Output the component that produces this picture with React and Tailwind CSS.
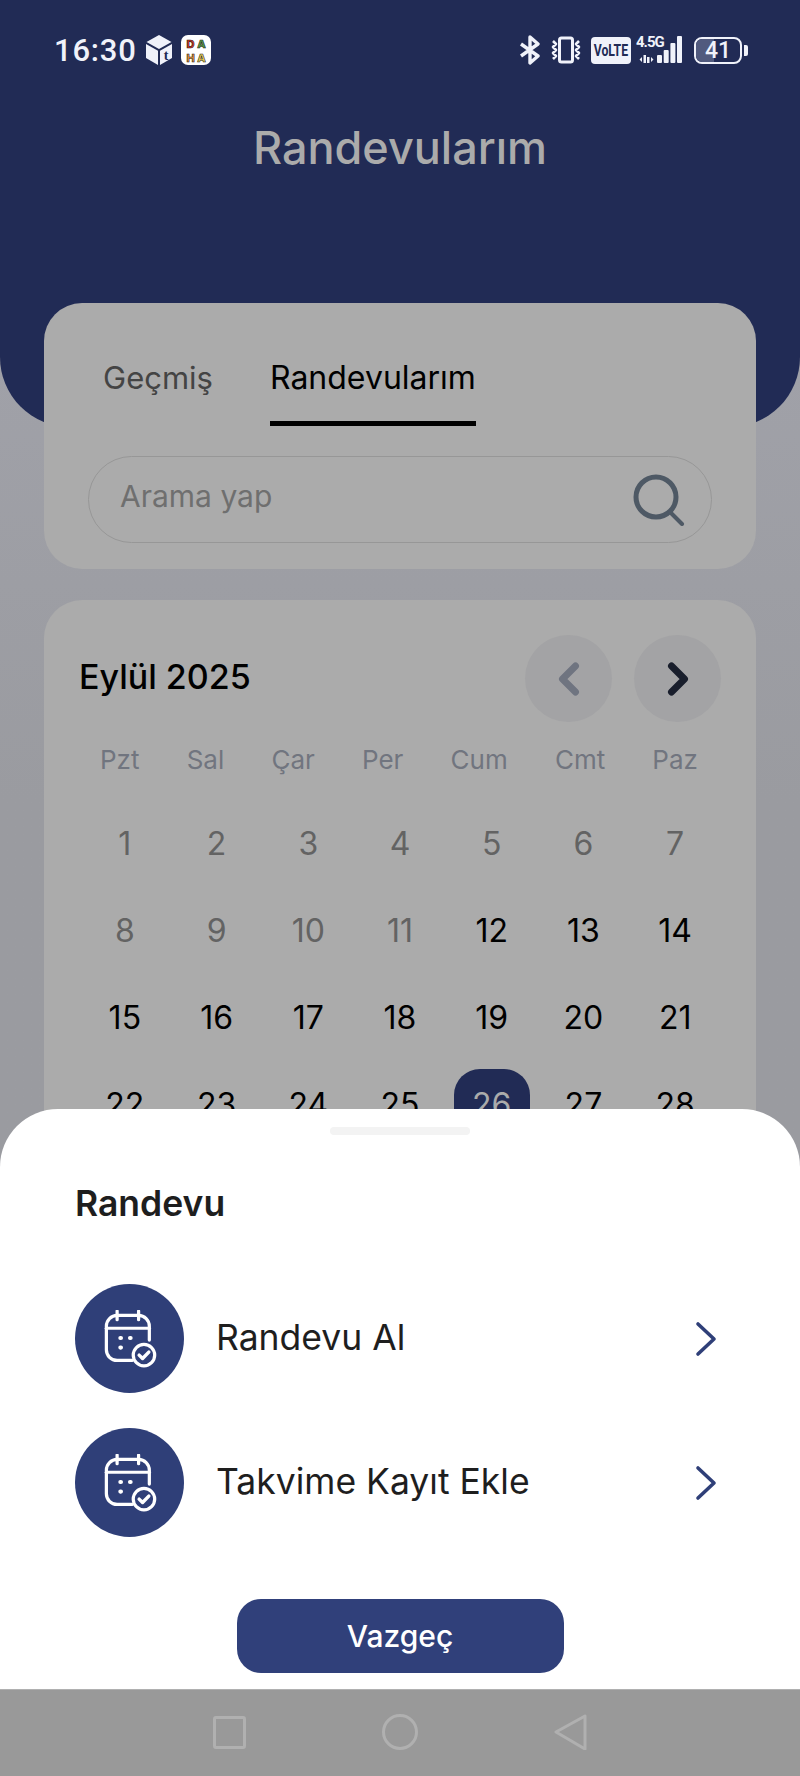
import { ChevronLeft, ChevronRight } from 'lucide-react';

const weekDays = ['Pzt', 'Sal', 'Çar', 'Per', 'Cum', 'Cmt', 'Paz'];
const passedDays = 11;
const days = Array.from({ length: 28 }, (_, i) => i + 1);

function CalendarCheck() {
  return (
    <svg width="54" height="58" viewBox="0 0 50 54" fill="none" stroke="white" strokeWidth="3" strokeLinecap="round" strokeLinejoin="round">
      <path d="M27 47H13a10 10 0 0 1-10-10V15A10 10 0 0 1 13 5h20a10 10 0 0 1 10 10v13" />
      <path d="M3 17h40" />
      <path d="M13 1v8M33 1v8" />
      <circle cx="38" cy="42" r="10" />
      <path d="M33.500 42l3.200 3.200 5.800-6" strokeWidth="3.200" />
      <path d="M16 26h.6M25 26h.6M16 35h.6" strokeWidth="3.800" />
    </svg>
  );
}

function SheetRow({ label }) {
  return (
    <div className="flex items-center">
      <div className="w-[109px] h-[109px] rounded-full bg-[#2f3f78] flex items-center justify-center">
        <CalendarCheck />
      </div>
      <span className="ml-[32px] flex-1 text-[35.5px] font-normal text-[#1e1e1e] -mt-[2px]">{label}</span>
      <svg width="24" height="36" viewBox="0 0 24 36" fill="none" stroke="#2f3f78" strokeWidth="3.600" strokeLinecap="round" strokeLinejoin="round" className="mr-[5px]">
        <path d="M4 3l16 15L4 33" />
      </svg>
    </div>
  );
}

function DahaLogo() {
  return (
    <svg className="ml-[9px]" width="30" height="30" viewBox="0 0 30 30" fontFamily="Inter" fontWeight="800" fontSize="11" stroke="#2a1c14" strokeWidth="0.6" textAnchor="middle">
      <rect width="30" height="30" rx="7" fill="white" stroke="none" />
      <text x="9.500" y="12.500" fill="#d0341f">D</text>
      <text x="20.500" y="12.500" fill="#4f9a48">A</text>
      <text x="9.500" y="26.500" fill="#e8933f">H</text>
      <text x="20.500" y="26.500" fill="#eed35a">A</text>
    </svg>
  );
}

function StatusBar() {
  return (
    <div className="flex items-center justify-between h-[30px] pl-[54px] pr-[52px] text-[#f0f2fa]">
      <div className="flex items-center">
        <span className="text-[31px] font-medium tracking-[0.8px] font-[Roboto] leading-none">16:30</span>
        <svg className="ml-[9px]" width="26" height="30" viewBox="0 0 26 30">
          <path d="M13 0l12.500 7L13 14 .5 7z" fill="#f0f2fa" />
          <path d="M0 9l12 6.800V30L0 23z" fill="#f0f2fa" />
          <path d="M14 15.800L26 9v14l-12 7z" fill="#f0f2fa" />
          <text x="20" y="25" fontSize="14" fontWeight="700" fontFamily="Liberation Serif" fill="#212b55" textAnchor="middle">t</text>
        </svg>
        <DahaLogo />
      </div>
      <div className="flex items-center">
        <svg width="22" height="30" viewBox="0 0 22 30" fill="none" stroke="#f0f2fa" strokeWidth="3.400" strokeLinejoin="round">
          <path d="M2 9l17 12-8 7V2l8 7L2 21" />
        </svg>
        <svg className="ml-[9px]" width="32" height="28" viewBox="0 0 32 28" fill="none" stroke="#f0f2fa" strokeWidth="2.600" strokeLinejoin="round">
          <rect x="9.500" y="2" width="13" height="24" rx="2" strokeWidth="3" />
          <path d="M3 5l3 3-3 3 3 3-3 3 3 3-3 3M29 5l-3 3 3 3-3 3 3 3-3 3 3 3" />
        </svg>
        <div className="ml-[9px] w-[40px] h-[27px] rounded-[4px] bg-[#f0f2fa] text-[#212b55] text-[17px] font-bold font-[Roboto] leading-[27px] text-center">
          <span className="inline-block scale-x-[0.72] origin-center whitespace-nowrap -mx-[4px]">VoLTE</span>
        </div>
        <div className="ml-[5px] relative w-[47px] h-[30px]">
          <span className="absolute left-0 -top-[1px] text-[15px] font-bold font-[Roboto] leading-[16px] tracking-[-1px]">4.5G</span>
          <svg className="absolute left-0 top-0" width="47" height="30" viewBox="0 0 47 30" fill="#f0f2fa">
            <path d="M7.500 20h2.500v8H7.500zM11 22h2.500v6H11zM6 22v5l-2.500-2.500zM15 22v5l2.500-2.500z" />
            <rect x="21" y="20" width="5" height="8" rx="1" />
            <rect x="27.700" y="15" width="5" height="13" rx="1" />
            <rect x="34.400" y="8" width="5" height="20" rx="1" />
            <rect x="41" y="1" width="5" height="27" rx="1" />
          </svg>
        </div>
        <div className="ml-[11px] relative w-[48px] h-[27px] rounded-[8px] border-2 border-[#f0f2fa] overflow-hidden">
          <div className="h-full w-[41%] bg-[#515a7e]"></div>
          <span className="absolute inset-0 text-center text-[23px] font-medium font-[Roboto] leading-[23px]">41</span>
        </div>
        <div className="ml-[2px] w-[4px] h-[11px] rounded-r-[2px] bg-[#f0f2fa]"></div>
      </div>
    </div>
  );
}

export default function App() {
  return (
    <div className="relative h-[1776px] w-[800px] overflow-hidden bg-gradient-to-b from-[#a5a6af] to-[#9a9ba0] to-[45%] font-[Inter]">
      {/* Header */}
      <header className="h-[427px] bg-[#212b55] rounded-b-[70px] pt-[35px]">
        <StatusBar />
        <h1 className="mt-[58px] text-center text-[45px] leading-[50px] font-medium text-[#ababab]">Randevularım</h1>
      </header>

      <div className="mx-[44px] -mt-[124px]">
        {/* Tabs and search */}
        <section className="h-[266px] rounded-[38px] bg-[#ababab] px-[44px]">
          <div className="flex pl-[15px] pt-[56px]">
            <span className="text-[31px] leading-[38px] font-normal text-[#444444]">Geçmiş</span>
            <div className="ml-[57px] border-b-[5px] border-black pb-[24px]">
              <span className="text-[32px] leading-[38px] font-normal text-black">Randevularım</span>
            </div>
          </div>
          <div className="mt-[30px] h-[87px] rounded-full border border-[#979797] flex items-center justify-between pl-[31px] pr-[26px]">
            <span className="text-[30px] text-[#6f6f6f] -mt-[6px]">Arama yap</span>
            <svg width="52" height="52" viewBox="0 0 52 52" fill="none" stroke="#4e5965" strokeWidth="5" strokeLinecap="round">
              <circle cx="23" cy="23" r="20" />
              <path d="M37 38l12 12" strokeWidth="4" />
            </svg>
          </div>
        </section>

        {/* Calendar */}
        <section className="mt-[31px] h-[700px] rounded-[38px] bg-[#ababab] pt-[35px]">
          <div className="flex items-center justify-between pl-[35px] pr-[35px]">
            <span className="text-[34px] font-medium text-black -mt-[5px]">Eylül 2025</span>
            <div className="flex gap-[22px]">
              <div className="w-[87px] h-[87px] rounded-full bg-[#a3a3a5] flex items-center justify-center">
                <ChevronLeft size={52} strokeWidth={3.2} className="text-[#6f7480]" />
              </div>
              <div className="w-[87px] h-[87px] rounded-full bg-[#a3a3a5] flex items-center justify-center">
                <ChevronRight size={52} strokeWidth={3.2} className="text-[#191e2c]" />
              </div>
            </div>
          </div>
          <div className="mt-[21px] flex justify-between pl-[56px] pr-[58px]">
            {weekDays.map((d) => (
              <span key={d} className="text-[26px] leading-[34px] text-[#71757f]">{d}</span>
            ))}
          </div>
          <div className="mt-[29px] grid grid-cols-7 px-[35px] gap-y-[11px]">
            {days.map((d) => (
              <div key={d} className="h-[76px] flex items-center justify-center">
                <div className={d === 26 ? 'w-[76px] h-[72px] rounded-[26px] bg-[#212b55] flex items-center justify-center text-[#ababab] text-[32px]' : d <= passedDays ? 'text-[32px] text-[#636363]' : 'text-[32px] text-black'}>
                  {d}
                </div>
              </div>
            ))}
          </div>
        </section>
      </div>

      {/* Bottom sheet */}
      <div className="absolute left-0 right-0 bottom-0">
        <div className="h-[580px] rounded-t-[58px] bg-white px-[75px] pt-[18px]">
          <div className="mx-auto w-[140px] h-[8px] rounded-full bg-[#f3f3f3]"></div>
          <h2 className="mt-[49px] text-[35.5px] leading-[40px] font-semibold text-[#1e1e1e]">Randevu</h2>
          <div className="mt-[60px] flex flex-col gap-[35px] pr-[2px]">
            <SheetRow label="Randevu Al" />
            <SheetRow label="Takvime Kayıt Ekle" />
          </div>
          <button className="block mx-auto mt-[62px] w-[327px] h-[74px] rounded-[24px] bg-[#30407a] text-white text-[30px] font-medium">Vazgeç</button>
        </div>
        <nav className="h-[87px] bg-[#999999] border-t border-[#b0b0b0] flex items-center justify-center gap-[136px] pb-[2px]">
          <div className="w-[33px] h-[33px] rounded-[3px] border-[3px] border-[#b0b0b0]"></div>
          <div className="w-[36px] h-[36px] rounded-full border-[3px] border-[#b0b0b0]"></div>
          <svg width="33" height="36" viewBox="0 0 33 36" fill="none" stroke="#b0b0b0" strokeWidth="3" strokeLinejoin="round">
            <path d="M2 18L31 2v33z" />
          </svg>
        </nav>
      </div>
    </div>
  );
}
